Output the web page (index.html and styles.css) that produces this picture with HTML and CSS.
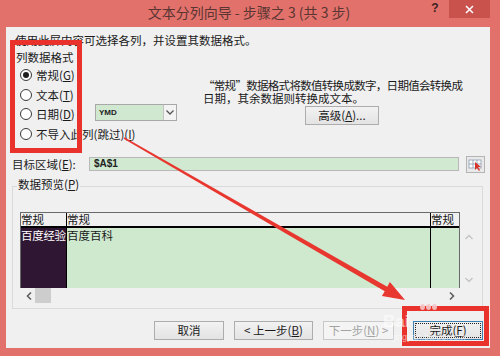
FILE: index.html
```html
<!DOCTYPE html>
<html lang="zh-CN">
<head>
    <meta charset="UTF-8">
    <title>文本分列向导 - 步骤之 3 (共 3 步)</title>
    <link rel="stylesheet" href="styles.css">
</head>
<body>
    <div class="window">
        <div class="titlebar">
            <div class="title">文本分列向导 - 步骤之 3 (共 3 步)</div>
            <div class="help">?</div>
            <div class="close">
                <svg width="9" height="9" viewBox="0 0 9 9"><path d="M1 1 L8 8 M8 1 L1 8" stroke="#fff" stroke-width="1.5"/></svg>
            </div>
        </div>

        <div class="client">
            <p class="intro">使用此屏内容可选择各列，并设置其数据格式。</p>

            <div class="format">
                <div class="format-left">
                    <div class="group-label">列数据格式</div>
                    <div class="opt"><span class="radio checked"></span><span>常规(<u>G</u>)</span></div>
                    <div class="opt"><span class="radio"></span><span>文本(<u>T</u>)</span></div>
                    <div class="opt"><span class="radio"></span><span class="opt-text">日期(<u>D</u>)</span>
                        <div class="combo">
                            <span class="combo-val">YMD</span>
                            <span class="combo-btn">
                                <svg width="8" height="5" viewBox="0 0 8 5"><path d="M0.5 0.5 L4 4 L7.5 0.5" fill="none" stroke="#555" stroke-width="1.3"/></svg>
                            </span>
                        </div>
                    </div>
                    <div class="opt"><span class="radio"></span><span>不导入此列(跳过)(<u>I</u>)</span></div>
                </div>
                <div class="format-right">
                    <p class="desc"><span class="line1">“常规”数据格式将数值转换成数字，日期值会转换成</span><br>日期，其余数据则转换成文本。</p>
                    <button class="btn adv">高级(<u>A</u>)...</button>
                </div>
            </div>

            <div class="target">
                <span class="target-label">目标区域(<u>E</u>):</span>
                <div class="target-input">$A$1</div>
                <span class="pick">
                    <svg width="19" height="17" viewBox="0 0 19 17">
                        <rect x="0.5" y="0.5" width="18" height="16" fill="#e9e9e9" stroke="#b4b4b4"/>
                        <rect x="3" y="4" width="12" height="8" fill="#fff" stroke="#8a9bb0" stroke-width="0.8"/>
                        <path d="M3 8 H15 M7 4 V12 M11 4 V12" stroke="#8a9bb0" stroke-width="0.8"/>
                        <path d="M9 6 L9 14 L11 12 L13 15 L14 14 L12 11 L15 11 Z" fill="#d8322c"/>
                    </svg>
                </span>
            </div>

            <fieldset class="preview">
                <legend>数据预览(<u>P</u>)</legend>
                <div class="preview-body">
                    <div class="table-area">
                        <div class="table">
                            <div class="thead">
                                <div class="cell c1">常规</div>
                                <div class="cell c2">常规</div>
                                <div class="cell c3">常规</div>
                            </div>
                            <div class="tbody">
                                <div class="cell c1 sel">百度经验</div>
                                <div class="cell c2">百度百科</div>
                                <div class="cell c3"></div>
                            </div>
                        </div>
                        <div class="hscroll">
                            <svg class="arr-l" width="6" height="8" viewBox="0 0 6 8"><path d="M5 0.5 L1.5 4 L5 7.5" fill="none" stroke="#606060" stroke-width="1.6"/></svg>
                            <span class="thumb"></span>
                            <svg class="arr-r" width="6" height="8" viewBox="0 0 6 8"><path d="M1 0.5 L4.5 4 L1 7.5" fill="none" stroke="#606060" stroke-width="1.6"/></svg>
                        </div>
                    </div>
                    <div class="vscroll">
                        <svg width="8" height="6" viewBox="0 0 8 6"><path d="M0.5 5 L4 1.5 L7.5 5" fill="none" stroke="#c4c4c4" stroke-width="1.4"/></svg>
                        <svg width="8" height="6" viewBox="0 0 8 6"><path d="M0.5 1 L4 4.5 L7.5 1" fill="none" stroke="#c4c4c4" stroke-width="1.4"/></svg>
                    </div>
                </div>
            </fieldset>

            <div class="actions">
                <button class="btn cancel">取消</button>
                <button class="btn back">&lt; 上一步(<u>B</u>)</button>
                <button class="btn next" disabled>下一步(<u>N</u>) &gt;</button>
                <button class="btn finish"><span class="focus">完成(<u>F</u>)</span></button>
            </div>
        </div>

        <!-- annotations drawn over the dialog -->
        <svg class="arrow" width="500" height="356" viewBox="0 0 500 356">
            <polygon points="124.4,137.35 387.25,286.8 389.9,282.1 405,300 381.9,295.9 384.75,291.2 123.6,138.65" fill="#e8372f"/>
        </svg>
        <div class="mark mark-format"></div>
        <div class="mark mark-finish"></div>
        <div class="watermark">
            <span class="paw"><i></i><i></i><i></i></span>
            <span class="wm-big">Bai</span>
            <span class="wm-small">jingyan.baidu.com</span>
        </div>
    </div>
</body>
</html>
```

FILE: styles.css
```css
body {
    margin: 0;
    font-family: "Noto Sans CJK SC", "Liberation Sans", sans-serif;
    font-size: 11.5px;
    color: #1a1a1a;
}
u {
    text-decoration: underline;
}
.window {
    position: relative;
    width: 500px;
    height: 356px;
    background: #e2716b;
    display: flex;
    flex-direction: column;
    overflow: hidden;
}
.titlebar {
    height: 27px;
    display: flex;
    align-items: flex-start;
    padding: 0 10px 0 75px;
    flex-shrink: 0;
}
.title {
    flex: 1;
    text-align: center;
    font-size: 14px;
    line-height: 25px;
    color: #5a3532;
}
.help {
    width: 24px;
    line-height: 17px;
    text-align: center;
    font-family: "Liberation Sans", sans-serif;
    font-size: 12px;
    font-weight: bold;
    color: #3b2222;
}
.close {
    width: 41px;
    height: 18px;
    margin-left: 2px;
    background: #c9524c;
    display: flex;
    align-items: center;
    justify-content: center;
}
.client {
    flex: 1;
    margin: 0 10px 8px 6px;
    background: #f0f0f0;
}
.intro {
    margin: 7px 0 0 9px;
    line-height: 13px;
}
.format {
    display: flex;
    margin-top: 4px;
}
.format-left {
    width: 194px;
    padding-left: 10px;
    box-sizing: border-box;
}
.group-label {
    line-height: 13px;
    margin-bottom: 1.5px;
}
.opt {
    display: flex;
    align-items: center;
    height: 19.5px;
    padding-left: 4px;
    white-space: nowrap;
}
.radio {
    width: 12px;
    height: 12px;
    box-sizing: border-box;
    border: 1px solid #3a3a3a;
    border-radius: 50%;
    background: #fff;
    margin-right: 4px;
    display: flex;
    align-items: center;
    justify-content: center;
    flex-shrink: 0;
}
.radio.checked::after {
    content: "";
    width: 6px;
    height: 6px;
    border-radius: 50%;
    background: #1e1e1e;
}
.opt-text {
    width: 59px;
}
.combo {
    display: flex;
    width: 82px;
    height: 17px;
    box-sizing: border-box;
    border: 1px solid #a8a8a8;
    background: #cfe8cf;
    margin-top: -3px;
}
.combo-val {
    flex: 1;
    font-family: "Liberation Sans", sans-serif;
    font-size: 8px;
    font-weight: bold;
    line-height: 15px;
    padding-left: 3px;
    color: #222;
}
.combo-btn {
    width: 12px;
    background: #f3f3f3;
    border-left: 1px solid #c4c4c4;
    display: flex;
    align-items: center;
    justify-content: center;
}
.format-right {
    flex: 1;
    padding: 28px 0 0 3px;
}
.desc {
    margin: 0;
    line-height: 13px;
    white-space: nowrap;
}
.desc .line1 {
    letter-spacing: -0.7px;
}
.btn {
    font-family: inherit;
    font-size: 11.5px;
    color: #1a1a1a;
    height: 19px;
    padding: 0;
    border: 1px solid #adadad;
    background: linear-gradient(#f2f2f2, #e3e3e3);
    line-height: 15px;
}
.adv {
    display: block;
    width: 74px;
    margin: 1px 0 0 102px;
}
.target {
    display: flex;
    align-items: center;
    height: 18px;
    margin-top: 11.5px;
    padding-left: 6px;
}
.target-label {
    width: 77px;
    white-space: nowrap;
}
.target-input {
    width: 370px;
    height: 14px;
    box-sizing: border-box;
    border: 1px solid #b8b8b8;
    background: #d0e9d0;
    font-family: "Liberation Sans", sans-serif;
    font-size: 10px;
    font-weight: bold;
    line-height: 12px;
    padding-left: 4px;
    color: #222;
}
.pick {
    display: flex;
    margin-left: 7px;
}
.preview {
    margin: 5px 7px 0 6px;
    padding: 0;
    border: 1px solid #dadada;
    min-width: 0;
}
.preview legend {
    margin-left: 4px;
    padding: 0 1px 4px;
    line-height: 13px;
}
.preview-body {
    display: flex;
    padding: 17px 0 5px 7px;
}
.table-area {
    width: 440px;
}
.table {
    border: 1px solid #6a6a6a;
    border-bottom: none;
}
.thead, .tbody {
    display: flex;
}
.thead {
    height: 13px;
    border-bottom: 2px solid #000;
    background: #f0f0f0;
}
.tbody {
    height: 60px;
}
.cell {
    line-height: 13px;
    white-space: nowrap;
    box-sizing: border-box;
}
.c1 {
    width: 46px;
    border-right: 1px solid #000;
}
.c2 {
    width: 364px;
    border-right: 1px solid #000;
}
.c3 {
    flex: 1;
}
.tbody .cell {
    background: #cfe9cf;
    padding-top: 1px;
}
.tbody .sel {
    background: #2f1632;
    color: #fff;
    letter-spacing: -0.3px;
}
.hscroll {
    height: 15px;
    display: flex;
    align-items: center;
    background: #f0f0f0;
}
.arr-l {
    margin-left: 6px;
}
.thumb {
    width: 16px;
    height: 15px;
    margin-left: 3px;
    background: #cdcdcd;
}
.arr-r {
    margin-left: auto;
    margin-right: 5px;
}
.vscroll {
    width: 18px;
    height: 60px;
    margin-top: 16px;
    display: flex;
    flex-direction: column;
    align-items: center;
    justify-content: space-between;
    padding: 6px 0 5px;
    box-sizing: border-box;
}
.actions {
    display: flex;
    justify-content: flex-end;
    margin-top: 12px;
    padding-right: 7px;
}
.cancel {
    width: 70px;
}
.back {
    width: 79px;
    margin-left: 10px;
}
.next {
    width: 71px;
    margin-left: 10px;
    color: #a3a3a3;
    border-color: #c8c8c8;
    background: #f4f4f4;
}
.finish {
    width: 70px;
    margin-left: 19px;
    border-color: #3c7fb1;
    padding: 2px;
    display: flex;
}
.finish .focus {
    flex: 1;
    outline: 1px dotted #222;
    line-height: 13px;
}
.arrow {
    position: absolute;
    left: 0;
    top: 0;
    pointer-events: none;
}
.mark {
    position: absolute;
    border: 5px solid #e8322b;
    box-sizing: border-box;
}
.mark-format {
    left: 10px;
    top: 40px;
    width: 72px;
    height: 113px;
}
.mark-finish {
    left: 402px;
    top: 306px;
    width: 87px;
    height: 40px;
}
.watermark {
    position: absolute;
    left: 383px;
    top: 303px;
    width: 100px;
    height: 42px;
    color: rgba(255, 255, 255, 0.6);
    font-family: "Liberation Sans", sans-serif;
}
.wm-big {
    position: absolute;
    left: 0;
    top: 9px;
    font-size: 17px;
    font-weight: bold;
}
.wm-small {
    position: absolute;
    left: 10px;
    top: 29px;
    font-size: 9px;
}
.paw {
    position: absolute;
    left: 37px;
    top: 1px;
    display: flex;
    gap: 1px;
}
.paw i {
    width: 5px;
    height: 6px;
    border-radius: 50%;
    background: rgba(245, 200, 200, 0.9);
}
```
